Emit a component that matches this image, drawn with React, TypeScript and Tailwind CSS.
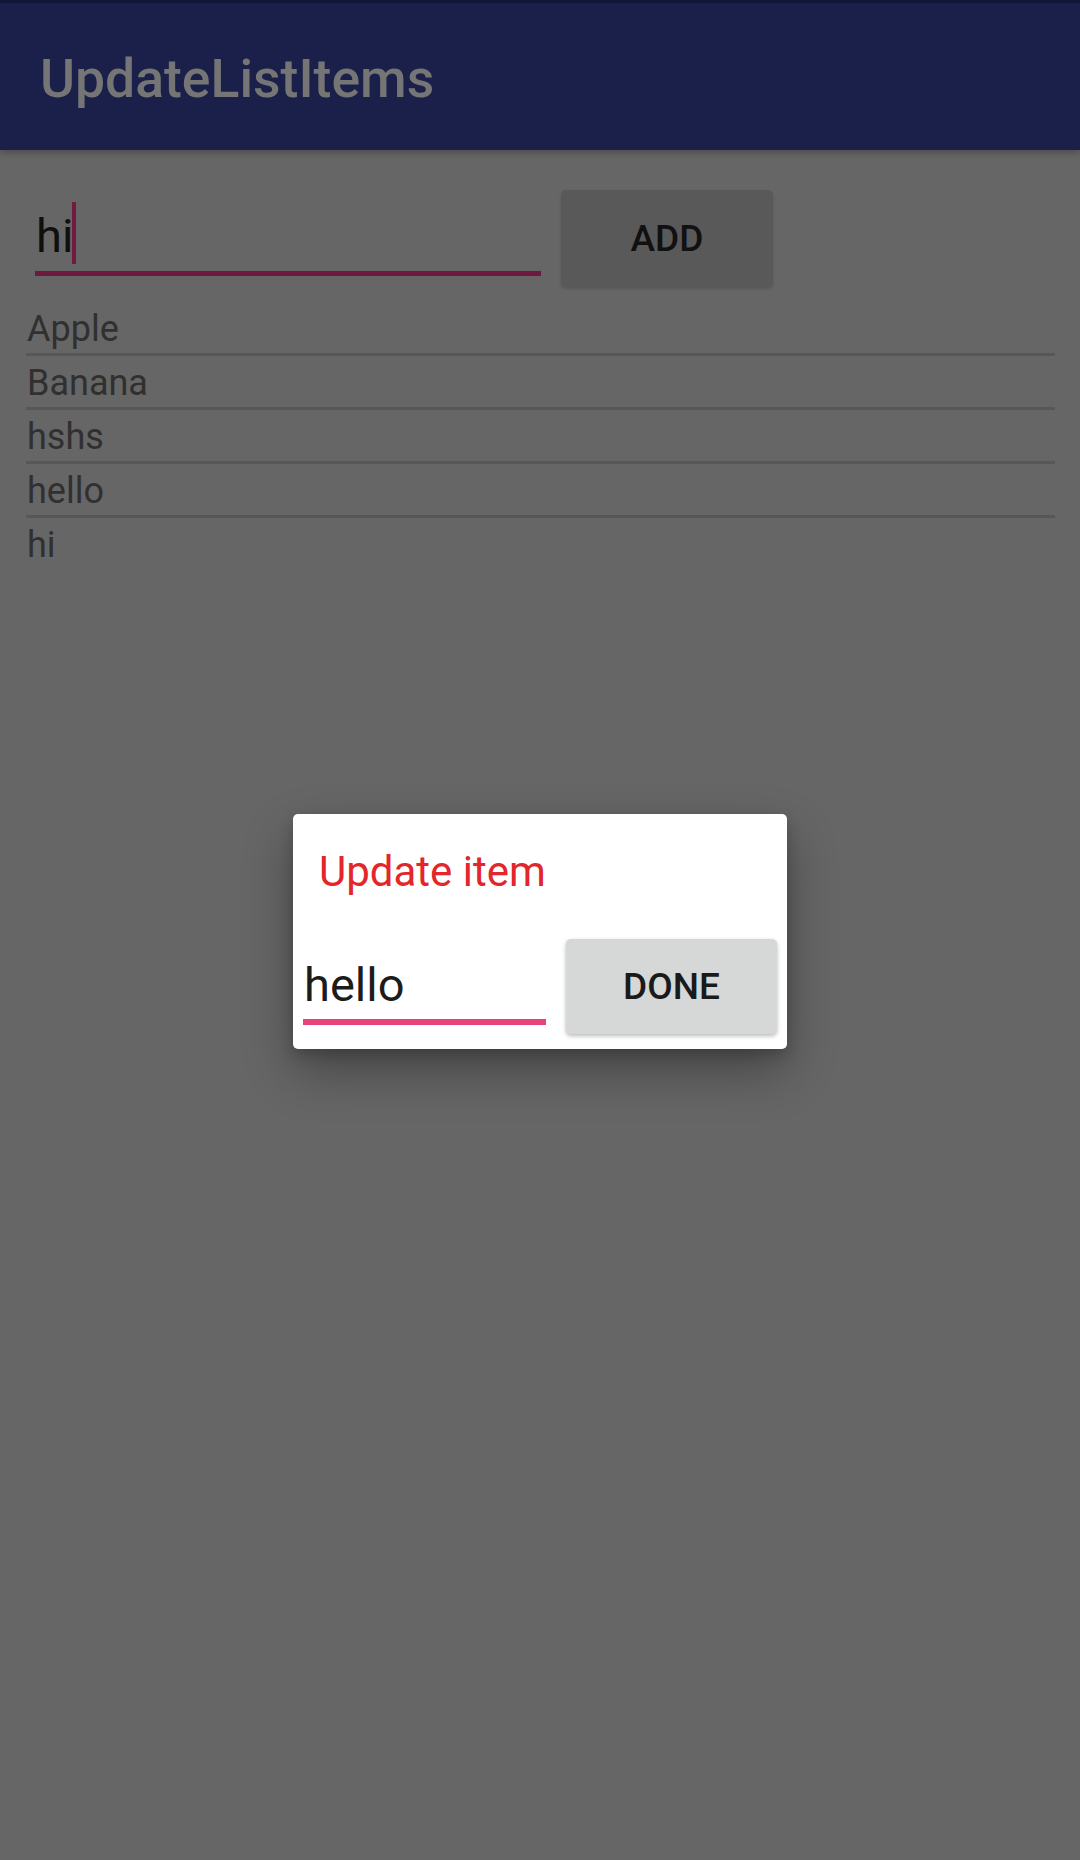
import React from "react";

const items = ["Apple", "Banana", "hshs", "hello", "hi"];

export default function App() {
  return (
    <div
      className="relative w-[1080px] h-[1860px] bg-[#666666] overflow-hidden"
      style={{ fontFamily: "Roboto, 'Noto Sans', sans-serif" }}
    >
      {/* App bar */}
      <div className="h-[150px] bg-[#1a2049] border-t-[3px] border-[#12173a] shadow-[0_3px_6px_rgba(0,0,0,0.25)] pl-[40px] pt-[49px]">
        <div className="text-[53.5px] leading-none font-medium text-[#757575]">UpdateListItems</div>
      </div>

      {/* Input row */}
      <div className="flex items-start pl-[35px] pt-[40px]">
        <div className="w-[506px] pt-[22px]">
          <div className="relative text-[47px] leading-none text-[#0f0f0f] pl-[1px]">
            hi
            <span className="absolute left-[37px] top-[-10px] w-[4px] h-[62px] bg-[#74193f]" />
          </div>
          <div className="mt-[12px] h-[5px] bg-[#6e1a3e]" />
        </div>
        <div className="ml-[20px] w-[212px] h-[97px] rounded-[5px] bg-[#595959] shadow-[0_2px_3px_rgba(0,0,0,0.15)] flex items-center justify-center">
          <span className="text-[37px] leading-none font-medium text-[#111111]">ADD</span>
        </div>
      </div>

      {/* List */}
      <div className="mt-[15px] ml-[26px] w-[1029px] flex flex-col">
        {items.map((item, i) => (
          <div key={item} className="flex flex-col">
            <div className="h-[51px] text-[36px] leading-[55px] text-[#303030] pl-[1px]">{item}</div>
            {i < items.length - 1 && <div className="h-[3px] bg-[#575757]" />}
          </div>
        ))}
      </div>

      {/* Dialog */}
      <div className="absolute inset-0 flex items-center justify-center pt-[3px]">
        <div className="w-[494px] h-[235px] bg-white rounded-[5px] shadow-[0_22px_50px_rgba(0,0,0,0.32),0_6px_14px_rgba(0,0,0,0.18)] flex flex-col">
          <div className="pt-[37px] pl-[26px] text-[42px] leading-none text-[#e3262a]">Update item</div>
          <div className="mt-[46px] flex items-start pl-[10px]">
            <div className="w-[243px] pt-[22px]">
              <div className="text-[47px] leading-none text-[#1c1c1c] pl-[1px]">hello</div>
              <div className="mt-[11px] h-[6px] bg-[#e8437a]" />
            </div>
            <div className="ml-[20px] w-[211px] h-[95px] rounded-[5px] bg-[#d6d7d7] shadow-[0_2px_4px_rgba(0,0,0,0.28)] flex items-center justify-center">
              <span className="text-[37px] leading-none font-medium text-[#1a1a1a]">DONE</span>
            </div>
          </div>
        </div>
      </div>
    </div>
  );
}
